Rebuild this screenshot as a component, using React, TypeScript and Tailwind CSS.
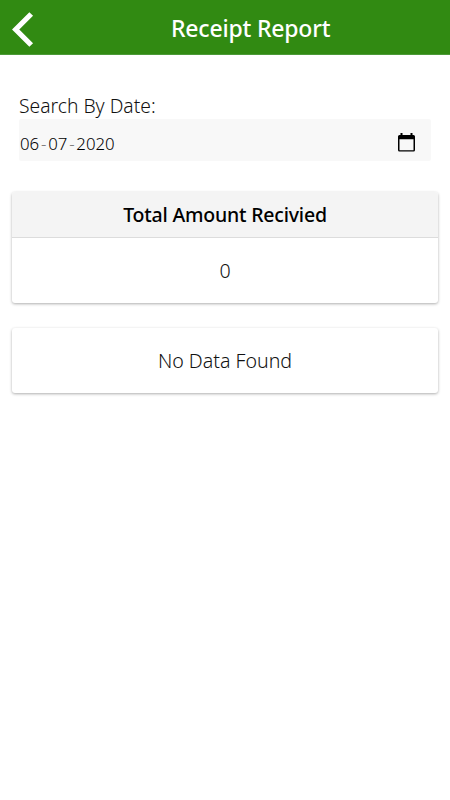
import type { ReactNode } from "react";

function Card({ title, children }: { title?: string; children: ReactNode }) {
  return (
    <section className="overflow-hidden rounded-[3px] bg-white shadow-[0_1px_3px_rgba(0,0,0,0.32)]">
      {title && (
        <h2 className="flex h-[46px] items-center justify-center border-b border-[#dcdcdc] bg-[#f4f4f4] text-[19.5px] font-medium tracking-[-0.2px] text-black">
          <span className="whitespace-nowrap">{title}</span>
        </h2>
      )}
      <p className="flex h-[65px] items-center justify-center text-[19.6px] font-[350] text-[#111]">
        <span className="whitespace-nowrap">{children}</span>
      </p>
    </section>
  );
}

export default function App() {
  const [day, month, year] = ["06", "07", "2020"];

  return (
    <div className="min-h-screen bg-white font-['Noto_Sans',sans-serif] text-[#111]">
      <header className="flex h-[55px] items-center border-b border-[#4c9a38] bg-[#318a12] text-white">
        <button type="button" aria-label="Back" className="mt-[6px] ml-3 h-9 w-[22px]">
          <svg viewBox="0 0 22 36" className="h-9 w-[22px]" fill="none" stroke="currentColor" strokeWidth="5.2">
            <path d="M19.200 2 3.700 17.500 19.200 33" />
          </svg>
        </button>
        <h1 className="mt-[3px] ml-[137px] whitespace-nowrap text-[23px] font-medium tracking-[-0.2px]">
          Receipt Report
        </h1>
      </header>

      <main className="px-3 pt-[38px]">
        <div className="px-[7px]">
          <label className="block h-[26px] whitespace-nowrap text-[19.3px] leading-[26px] font-light">
            Search By Date:
          </label>
          <div className="flex h-[42px] items-center justify-between rounded-xs bg-[#f8f8f8] pr-4 pl-px">
            <div className="mt-2 flex text-[16.8px] font-light text-black">
              <span>{day}</span>
              <span className="w-[9px] text-center text-[#777]">-</span>
              <span>{month}</span>
              <span className="w-[9px] text-center text-[#777]">-</span>
              <span>{year}</span>
            </div>
            <svg viewBox="0 0 17 19" className="mt-[5px] h-[19px] w-[17px]">
              <path fill="#000" fillRule="evenodd" d="M2.500 0h2v2h8V0h2v2h1q1.500 0 1.500 1.500v13.500q0 1.500-1.500 1.500h-14Q0 18.500 0 17V3.500Q0 2 1.500 2h1zM1.500 6.300v10.900h14V6.300z" />
            </svg>
          </div>
        </div>

        <div className="mt-[31px] flex flex-col gap-[25px]">
          <Card title="Total Amount Recivied">0</Card>
          <Card>No Data Found</Card>
        </div>
      </main>
    </div>
  );
}
